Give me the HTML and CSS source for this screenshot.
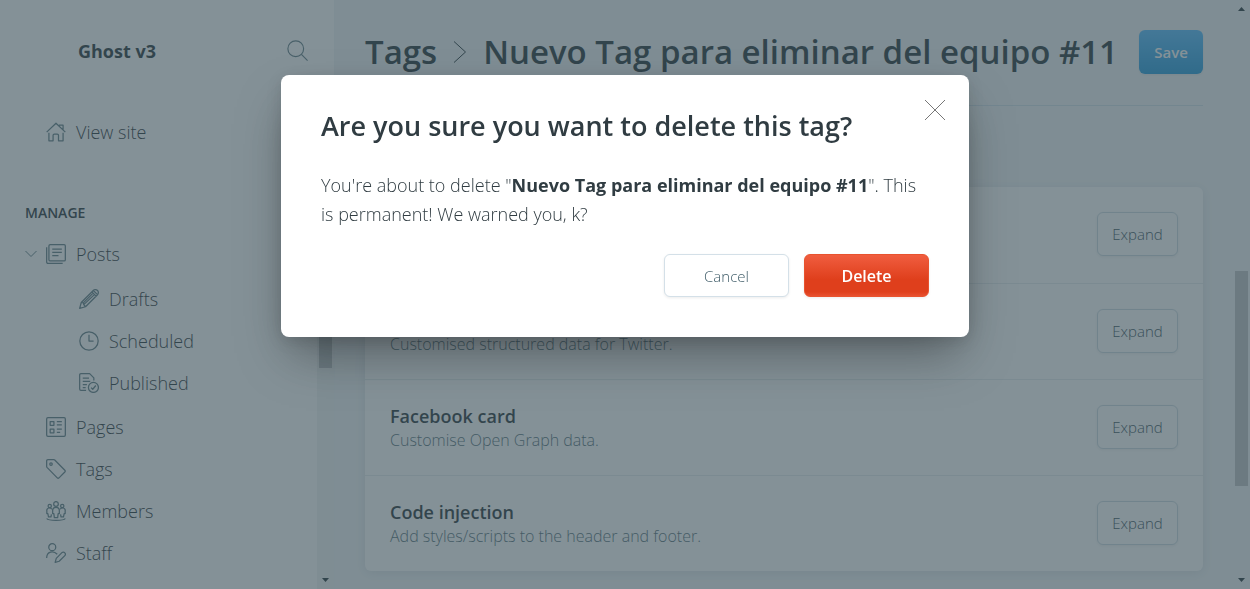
FILE: index.html
```html
<!DOCTYPE html>
<html lang="en">
<head>
<meta charset="utf-8">
<title>Ghost v3 - Tags</title>
<link rel="stylesheet" href="styles.css">
</head>
<body>
<div class="app">
  <aside class="sidebar">
    <header class="brand">
      <strong>Ghost v3</strong>
      <button class="icon-button" aria-label="Search"><svg class="icon search" viewBox="0 0 24 24"><circle cx="10" cy="10" r="9"/><path d="M16.5 16.5l7 7"/></svg></button>
    </header>
    <div class="nav-area">
      <nav class="nav">
        <a class="nav-item" href="#"><svg class="icon" viewBox="0 0 24 24"><path d="M.8 12.2L12 1.5l11.2 10.7M3.5 13v9.500h5V16a1.500 1.500 0 0 1 1.500-1.500h3.500A1.500 1.500 0 0 1 15 16v6.500h5.500V13M16 4.500V3.800h4.500v5.200"/></svg>View site</a>
        <h2 class="nav-title">Manage</h2>
        <a class="nav-item expandable" href="#"><svg class="chevron" viewBox="0 0 12 8"><path d="M.5 1L6 6.500 11.500 1"/></svg><svg class="icon" viewBox="0 0 24 24"><rect x="3.500" y=".8" width="19.700" height="19.500" rx="1.500"/><path d="M.8 4v17.700a1.500 1.500 0 0 0 1.500 1.500H20M7.500 6h11.500M7.500 10h11.500M7.500 14h7.500"/></svg>Posts</a>
        <div class="subnav">
          <a class="nav-item" href="#"><svg class="icon" viewBox="0 0 24 24"><path d="M22.200 1.800a3.600 3.600 0 0 0-5.100 0L2.700 16.200.8 23.200l7-1.900L22.200 6.900a3.600 3.600 0 0 0 0-5.100zM15.500 3.400l5.100 5.100M17.200 1.800l5 5M2.700 16.200l2.500.5.500 2.100 2.100 2.500M5.200 16.700L16.900 5M5.700 18.800L18.500 6.800"/></svg>Drafts</a>
          <a class="nav-item" href="#"><svg class="icon" viewBox="0 0 24 24"><circle cx="12" cy="12" r="11"/><path d="M12 4.500V12h5.500"/></svg>Scheduled</a>
          <a class="nav-item" href="#"><svg class="icon" viewBox="0 0 24 24"><path d="M8.500 20.800H2.300a1.500 1.500 0 0 1-1.500-1.500V2.300A1.500 1.500 0 0 1 2.300.8h10.500l5 5V9M4.500 6h7.500M4.500 10h9M4.500 14h5M4.500 17.500H8"/><circle cx="17.300" cy="17.300" r="6"/><path d="M14.500 17.500l2 2 3.700-4.500"/></svg>Published</a>
        </div>
        <a class="nav-item" href="#"><svg class="icon" viewBox="0 0 24 24"><rect x=".8" y=".8" width="22.400" height="22.400" rx="1.500"/><path d="M5 5.500h4.500V10H5zM5 14.500h4.500V19H5zM13 5.500h6M13 9.500h6M13 14.500h6M13 18.500h4"/></svg>Pages</a>
        <a class="nav-item" href="#"><svg class="icon" viewBox="0 0 24 24"><path d="M.8 2.300v6.800a1.500 1.500 0 0 0 .4 1L13.500 22.600a1.500 1.500 0 0 0 2.100 0l7-7a1.500 1.500 0 0 0 0-2.100L10.500 1.200a1.500 1.500 0 0 0-1-.4H2.300A1.500 1.500 0 0 0 .8 2.300z"/><circle cx="6" cy="6" r="1.500"/></svg>Tags</a>
        <a class="nav-item" href="#"><svg class="icon" viewBox="0 0 24 24"><circle cx="12" cy="3.500" r="2.800"/><circle cx="4.500" cy="6" r="2"/><circle cx="19.500" cy="6" r="2"/><path d="M10 20l-.6-5H8v-3.500a4 4 0 0 1 8 0V15h-1.400l-.6 5zM7 10a3.200 3.200 0 0 0-6 2v3h1.200l.8 4h3l.5-3M17 10a3.200 3.200 0 0 1 6 2v3h-1.200l-.8 4h-3l-.5-3M.8 21c2 3 20.400 3 22.400 0"/></svg>Members</a>
        <a class="nav-item" href="#"><svg class="icon" viewBox="0 0 24 24"><circle cx="7.500" cy="5" r="4.200"/><path d="M.8 18c0-8 8-9.500 12.700-4.500M22.400 11.600a2.300 2.300 0 0 0-3.300 0l-6.800 6.800-1.300 4.800 4.800-1.300 6.800-6.800a2.300 2.300 0 0 0-.2-3.500z"/></svg>Staff</a>
      </nav>
      <div class="scrollbar nav-scroll"><span class="arrow up"></span><span class="thumb"></span><span class="arrow down"></span></div>
    </div>
  </aside>

  <main class="content">
    <header class="page-header">
      <h1><a href="#">Tags</a><svg class="crumb" viewBox="0 0 14 24"><path d="M1 1.500l11.500 10.500L1 22.500"/></svg>Nuevo Tag para eliminar del equipo #11</h1>
      <button class="button save">Save</button>
    </header>
    <section class="settings">
      <div class="setting"><div><h3>Meta data</h3><p>Extra content for search engines.</p></div><button class="button">Expand</button></div>
      <div class="setting"><div><h3>Twitter card</h3><p>Customised structured data for Twitter.</p></div><button class="button">Expand</button></div>
      <div class="setting"><div><h3>Facebook card</h3><p>Customise Open Graph data.</p></div><button class="button">Expand</button></div>
      <div class="setting"><div><h3>Code injection</h3><p>Add styles/scripts to the header and footer.</p></div><button class="button">Expand</button></div>
    </section>
  </main>
  <div class="scrollbar page-scroll"><span class="arrow up"></span><span class="thumb"></span><span class="arrow down"></span></div>
</div>

<div class="overlay">
  <section class="modal" role="dialog" aria-modal="true" aria-labelledby="modal-title">
    <button class="close" aria-label="Close"><svg viewBox="0 0 20 20"><path d="M0 0l20 20M20 0L0 20"/></svg></button>
    <h2 id="modal-title">Are you sure you want to delete this tag?</h2>
    <p>You're about to delete "<strong>Nuevo Tag para eliminar del equipo #11</strong>". This is permanent! We warned you, k?</p>
    <footer class="actions">
      <button class="button">Cancel</button>
      <button class="button danger">Delete</button>
    </footer>
  </section>
</div>
</body>
</html>
```
FILE: styles.css
```css
* { box-sizing: border-box; }
body {
  margin: 0;
  font-family: "Open Sans", "Noto Sans", sans-serif;
  font-weight: 300;
  color: #15252b;
}
h1, h2, h3, p { margin: 0; }
a { color: inherit; text-decoration: none; }
button { font: inherit; }
strong { font-weight: 700; }
svg { display: block; fill: none; stroke: currentColor; }

.app { display: flex; height: 100vh; overflow: hidden; background: #f1f4f6; }

.sidebar {
  display: flex;
  flex-direction: column;
  flex: 0 0 335px;
  background: #fff;
  border-right: 1px solid #edf2f5;
}
.brand {
  display: flex;
  align-items: center;
  justify-content: space-between;
  flex: 0 0 101px;
  padding: 0 26px 0 78px;
  font-size: 18px;
  line-height: 24px;
}
.icon-button { padding: 0; border: 0; background: none; }
.icon { flex: none; width: 20px; height: 20px; stroke-width: 1.5; color: #54727b; stroke-linejoin: round; }
.icon.search { width: 21px; height: 21px; stroke-width: 1.3; }
.nav-area { display: flex; flex: 1; min-height: 0; }
.nav { flex: 1; padding: 10px 0 0 25px; }
.nav-item {
  display: flex;
  align-items: center;
  gap: 10px;
  height: 42px;
  padding-left: 21px;
  font-size: 18px;
}
.nav-item.expandable { padding-left: 0; }
.chevron { width: 12px; height: 8px; margin-right: -1px; color: #54727b; }
.nav-title {
  margin: 50px 0 10px;
  font-size: 14px;
  line-height: 20px;
  font-weight: 600;
  text-transform: uppercase;
}
.subnav { padding: 3px 0 2px 33px; }

.scrollbar {
  display: flex;
  flex-direction: column;
  align-items: center;
  flex: 0 0 17px;
}
.arrow { flex: none; width: 7px; height: 4px; margin: 7px 0; background: #15252b; }
.arrow.up { clip-path: polygon(50% 0, 100% 100%, 0 100%); }
.arrow.down { margin-top: auto; clip-path: polygon(0 0, 100% 0, 50% 100%); }
.thumb { width: 13px; background: #b9bdbf; }
.nav-scroll { background: #f0f2f3; }
.nav-scroll .thumb { height: 51%; }
.page-scroll .thumb { height: 215px; margin-top: 253px; }

.content { flex: 1; min-width: 0; padding: 0 30px; }
.page-header {
  display: flex;
  align-items: center;
  justify-content: space-between;
  height: 106px;
  padding-bottom: 2px;
  border-bottom: 1px solid #cfdfe9;
}
h1 {
  display: flex;
  align-items: center;
  font-size: 33px;
  line-height: 44px;
  font-weight: 600;
  white-space: nowrap;
}
.crumb { width: 14px; height: 24px; margin: 0 16px; stroke-width: 1; }

.button {
  height: 44px;
  padding: 0 14px;
  border: 1px solid #d4e0e8;
  border-radius: 6px;
  background: #fff;
  box-shadow: 0 1px 3px rgba(0, 0, 0, .08);
  color: #3f5c68;
  font-size: 15px;
}
.settings .button { min-width: 81px; color: #2a444e; border-color: #c9d8e0; }
.button.save {
  min-width: 64px;
  border: 0;
  background: linear-gradient(#47b7ff, #1192d9);
  color: #fff;
  font-weight: 600;
}
.settings {
  margin-top: 81px;
  border-radius: 6px;
  background: #fff;
  box-shadow: 0 2px 12px rgba(30, 60, 80, .12);
}
.setting {
  display: flex;
  align-items: center;
  justify-content: space-between;
  height: 96px;
  padding: 0 25px 2px;
}
.setting + .setting { border-top: 1px solid #e4eaee; }
.setting h3 { padding-top: 2px; font-size: 18px; line-height: 24px; font-weight: 600; }
.setting p { font-size: 16px; line-height: 24px; color: #486670; }

.overlay {
  position: fixed;
  inset: 0;
  padding: 75px 16px 0;
  background: rgba(66, 86, 95, .65);
}
.modal {
  position: relative;
  width: 688px;
  max-width: 100%;
  margin: 0 auto;
  padding: 31px 40px 40px;
  border-radius: 8px;
  background: #fff;
  box-shadow: 0 4px 16px rgba(0, 0, 0, .12), 0 24px 48px -8px rgba(0, 0, 0, .35);
}
.modal h2 { font-size: 27px; line-height: 40px; font-weight: 600; color: #303c42; }
.modal p { margin-top: 25px; font-size: 18px; line-height: 29px; color: #303c42; }
.close {
  position: absolute;
  top: 25px;
  right: 24px;
  width: 20px;
  height: 20px;
  padding: 0;
  border: 0;
  background: none;
  color: #777;
}
.close svg { overflow: visible; }
.actions { display: flex; justify-content: flex-end; gap: 15px; margin-top: 25px; }
.actions .button { width: 125px; height: 43px; }
.actions .danger {
  border-color: #e8532f;
  background: linear-gradient(#f05d3f, #df3f1c 60%, #df3f1c 90%, #e8502f);
  color: #fff;
  font-size: 16px;
  font-weight: 600;
}
```
